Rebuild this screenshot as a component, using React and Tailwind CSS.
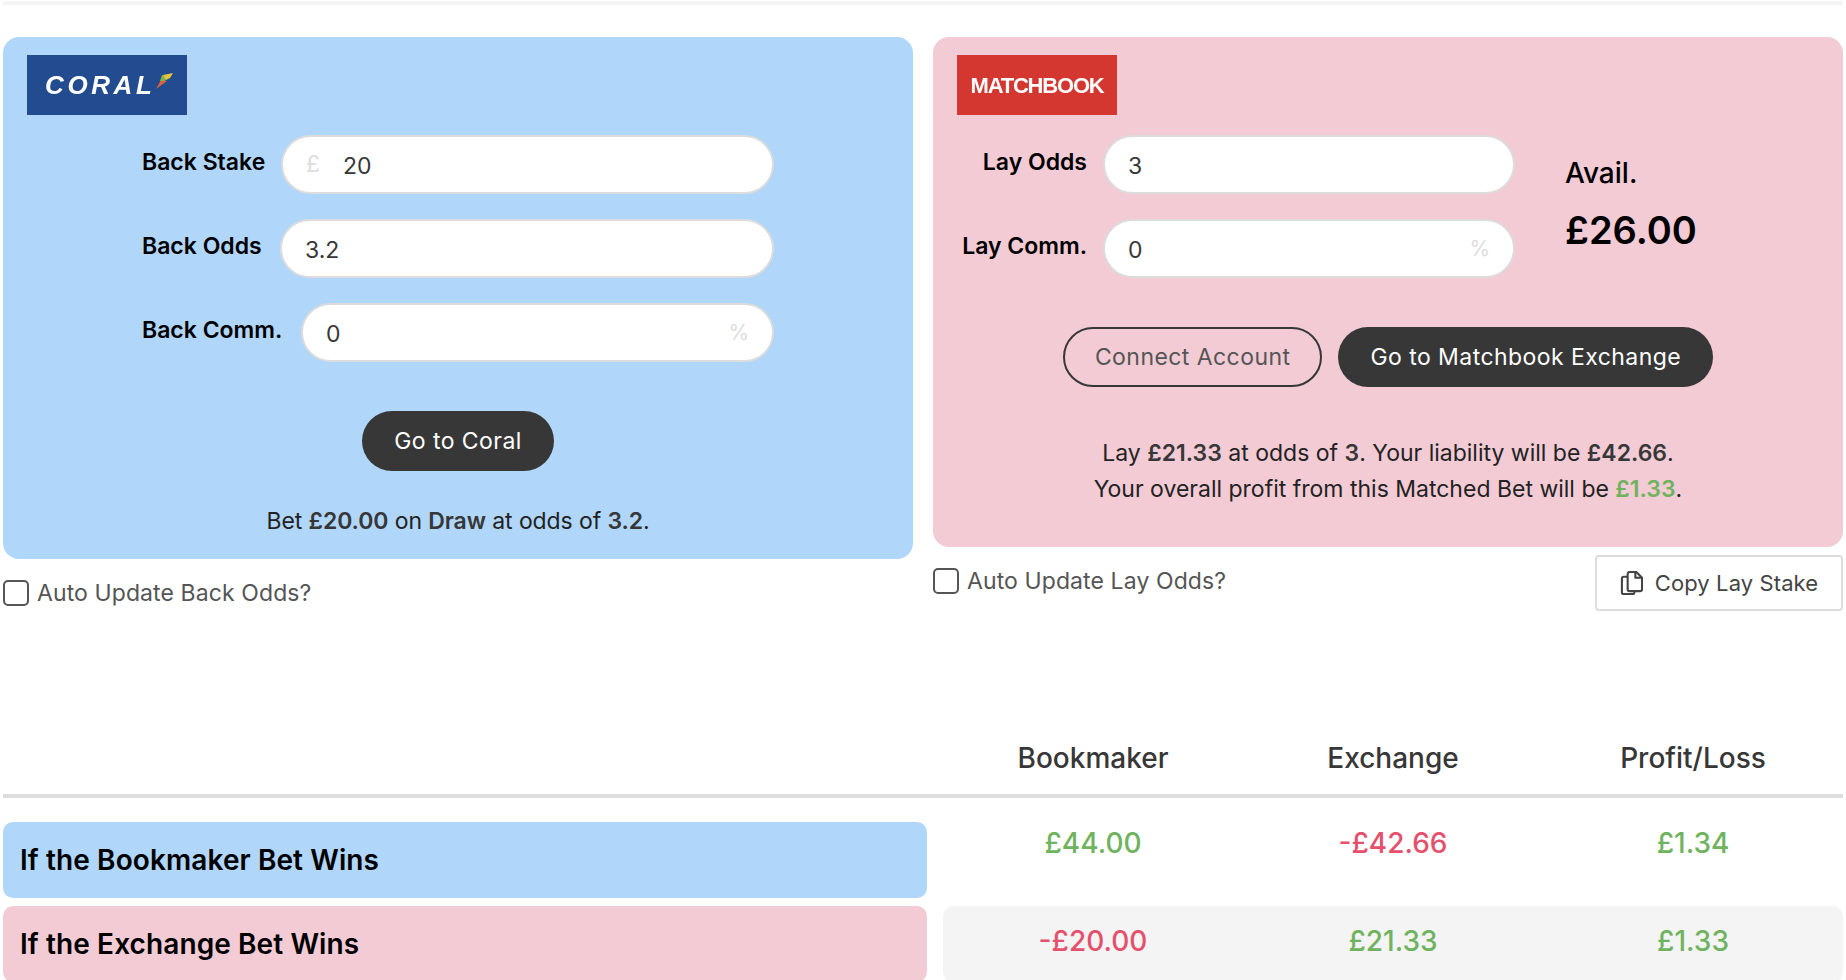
const BACK_FIELDS = [
  { label: 'Back Stake', value: '20', prefix: '£', labelWidth: 'w-[139px]' },
  { label: 'Back Odds', value: '3.2', labelWidth: 'w-[138px]' },
  { label: 'Back Comm.', value: '0', suffix: '%', labelWidth: 'w-[159px]' },
]

const LAY_FIELDS = [
  { label: 'Lay Odds', value: '3' },
  { label: 'Lay Comm.', value: '0', suffix: '%' },
]

const RESULTS = [
  { label: 'If the Bookmaker Bet Wins', bg: 'bg-[#b0d6fa]', book: '£44.00', exch: '-£42.66', pl: '£1.34' },
  { label: 'If the Exchange Bet Wins', bg: 'bg-[#f2cbd5]', book: '-£20.00', exch: '£21.33', pl: '£1.33', shaded: true },
]

function Field({ value, prefix, suffix }) {
  return (
    <div className="flex-1 min-w-0 h-[59px] flex items-center bg-white rounded-full border-2 border-[#dcdcdc] px-[23px] text-[23px] text-[#373737]">
      {prefix && <span className="w-[37px] text-[#dddddd]">{prefix}</span>}
      <input readOnly value={value} className="flex-1 min-w-0 bg-transparent outline-none pt-1" />
      {suffix && <span className="text-[#dddddd] text-[21px]">{suffix}</span>}
    </div>
  )
}

function AutoUpdate({ label }) {
  return (
    <label className="flex items-center gap-2 text-[23px] tracking-[0.1px] text-[#555555]">
      <input type="checkbox" className="appearance-none w-[26px] h-[26px] rounded-[5px] border-2 border-[#555555] bg-white" />
      <span>{label}</span>
    </label>
  )
}

const Money = ({ value }) => (
  <div className={`w-[300px] text-center text-[28px] font-medium ${value.startsWith('-') ? 'text-[#e5506d]' : 'text-[#6fb35f]'}`}>
    {value}
  </div>
)

export default function App() {
  return (
    <div className="h-screen overflow-hidden bg-white px-[3px] pt-px font-['Inter',sans-serif] text-[#222222]">
      <div className="h-1 bg-[#f4f4f4]" />

      <div className="grid grid-cols-2 gap-5 mt-8">
        {/* Bookmaker */}
        <div>
          <div className="h-[522px] rounded-2xl bg-[#b0d6fa] pt-[18px]">
            <div className="ml-6 w-40 h-[60px] bg-[#234b8f] flex items-center pl-[18px]">
              <span className="font-['Liberation_Sans',sans-serif] font-bold italic text-[26px] tracking-[3.6px] text-white blur-[0.4px]">CORAL</span>
              <svg width="20" height="18" viewBox="0 0 20 18" className="-ml-0.5 mb-2 blur-[0.4px]">
                <path d="M3 17 L8 8 L14 9 Z" fill="#e0603c" />
                <path d="M7 9 L9 3 L15 4 L12 9 Z" fill="#7fb44a" />
                <path d="M10 3 L20 1 L17 6 L13 8 Z" fill="#e9c23f" />
              </svg>
            </div>
            <div className="mt-5 ml-[139px] w-[632px] flex flex-col gap-[25px]">
              {BACK_FIELDS.map(({ label, value, prefix, suffix, labelWidth }) => (
                <div key={label} className="flex items-center">
                  <span className={`${labelWidth} shrink-0 pb-1 text-[23px] font-semibold text-black`}>{label}</span>
                  <Field value={value} prefix={prefix} suffix={suffix} />
                </div>
              ))}
            </div>
            <div className="flex justify-center mt-[49px]">
              <button className="h-[60px] px-8 pt-px rounded-full bg-[#373737] text-white text-[23px] tracking-[0.44px]">Go to Coral</button>
            </div>
            <p className="mt-[33px] text-center text-[23px] tracking-[-0.1px]">
              Bet <b className="font-semibold text-[#373737]">£20.00</b> on <b className="font-semibold text-[#373737]">Draw</b> at odds of <b className="font-semibold text-[#373737]">3.2</b>.
            </p>
          </div>
          <div className="mt-[17px]">
            <AutoUpdate label="Auto Update Back Odds?" />
          </div>
        </div>

        {/* Exchange */}
        <div>
          <div className="h-[510px] rounded-2xl bg-[#f2cbd5] pt-[18px]">
            <div className="ml-6 w-40 h-[60px] bg-[#d43730] flex items-center justify-center">
              <span className="font-['Liberation_Sans',sans-serif] font-bold text-[22px] tracking-[-1.2px] text-white blur-[0.4px]">MATCHBOOK</span>
            </div>
            <div className="flex mt-5">
              <div className="w-[582px] flex flex-col gap-[25px]">
                {LAY_FIELDS.map(({ label, value, suffix }) => (
                  <div key={label} className="flex items-center">
                    <span className="w-[170px] shrink-0 pr-4 pb-1 text-right text-[23px] font-semibold text-black whitespace-nowrap">{label}</span>
                    <Field value={value} suffix={suffix} />
                  </div>
                ))}
              </div>
              <div className="ml-[50px] pt-[17px] text-black">
                <div className="text-[28px] font-medium">Avail.</div>
                <div className="mt-[17px] text-[38px] font-semibold leading-none">£26.00</div>
              </div>
            </div>
            <div className="flex justify-center gap-4 mt-[49px]">
              <button className="h-[60px] px-[30px] pt-px rounded-full border-2 border-[#373737] text-[#555555] text-[23px] tracking-[0.44px]">Connect Account</button>
              <button className="h-[60px] px-8 pt-px rounded-full bg-[#373737] text-white text-[23px] tracking-[0.44px]">Go to Matchbook Exchange</button>
            </div>
            <div className="mt-12 text-center text-[23px] leading-9">
              <p>Lay <b className="font-semibold text-[#373737]">£21.33</b> at odds of <b className="font-semibold text-[#373737]">3</b>. Your liability will be <b className="font-semibold text-[#373737]">£42.66</b>.</p>
              <p>Your overall profit from this Matched Bet will be <b className="font-semibold text-[#6fb35f]">£1.33</b>.</p>
            </div>
          </div>
          <div className="flex justify-between items-start mt-2">
            <div className="mt-[9px]">
              <AutoUpdate label="Auto Update Lay Odds?" />
            </div>
            <button className="w-[248px] h-[56px] flex items-center justify-center gap-3 rounded border-2 border-[#dddddd] text-[22px] tracking-[0.1px] text-[#444444]">
              <svg width="23" height="25" viewBox="0 0 24 26" fill="none" stroke="currentColor" strokeWidth="2.2" strokeLinejoin="round">
                <path d="M8 6 H4 a2 2 0 0 0 -2 2 V22 a2 2 0 0 0 2 2 h9 a2 2 0 0 0 2 -2 v-1" />
                <path d="M8 3 a2 2 0 0 1 2 -2 h7 l6 6 v12 a2 2 0 0 1 -2 2 H10 a2 2 0 0 1 -2 -2 Z" />
                <path d="M16 1 v6 h7" />
              </svg>
              Copy Lay Stake
            </button>
          </div>
        </div>
      </div>

      {/* Results table */}
      <div className="flex justify-end mt-[126px] pb-[15px]">
        {['Bookmaker', 'Exchange', 'Profit/Loss'].map((h) => (
          <div key={h} className="w-[300px] text-center text-[28px] font-medium text-[#373737]">{h}</div>
        ))}
      </div>
      <div className="h-1 bg-[#dddddd]" />
      <div className="mt-6 flex flex-col gap-2">
        {RESULTS.map(({ label, bg, book, exch, pl, shaded }) => (
          <div key={label} className="flex gap-4">
            <div className={`w-[924px] h-[76px] rounded-[10px] flex items-center px-[17px] pb-px text-[28px] font-semibold tracking-[0.1px] text-black ${bg}`}>
              {label}
            </div>
            <div className={`w-[900px] h-[76px] rounded-[10px] flex ${shaded ? 'bg-[#f4f4f4] items-center pb-[7px]' : 'items-start'}`}>
              <Money value={book} />
              <Money value={exch} />
              <Money value={pl} />
            </div>
          </div>
        ))}
      </div>
    </div>
  )
}
